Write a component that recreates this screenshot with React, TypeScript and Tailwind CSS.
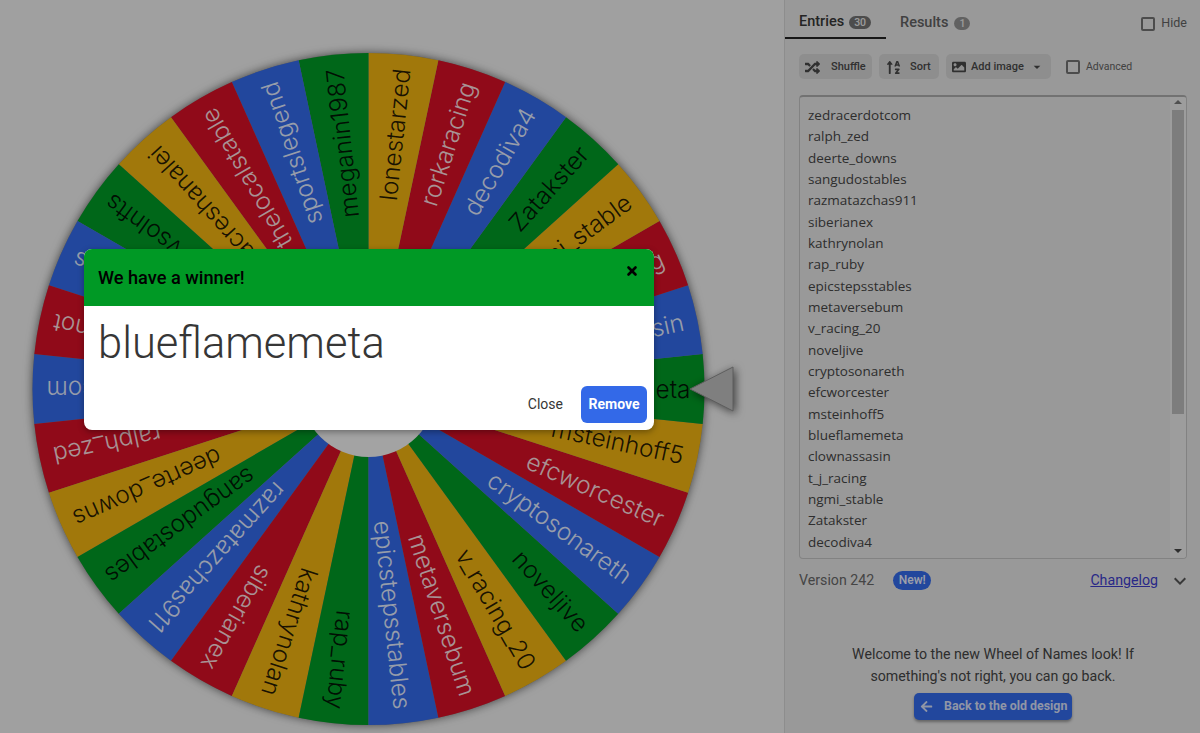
import React from 'react';
import { MdExpandMore, MdArrowDropDown } from 'react-icons/md';
import { FaSortAlphaUp, FaImage, FaRandom, FaArrowLeft } from 'react-icons/fa';
import { X } from 'lucide-react';

const entries = [
  'zedracerdotcom', 'ralph_zed', 'deerte_downs', 'sangudostables', 'razmatazchas911', 'siberianex',
  'kathrynolan', 'rap_ruby', 'epicstepsstables', 'metaversebum', 'v_racing_20', 'noveljive',
  'cryptosonareth', 'efcworcester', 'msteinhoff5', 'blueflamemeta', 'clownassasin', 't_j_racing',
  'ngmi_stable', 'Zatakster', 'decodiva4', 'rorkaracing', 'lonestarzed', 'meganin1987',
  'sportslegend', 'thelocalstable', 'acreshanalei', 'vsolnfts', 'stablemates', 'tonysnot',
];

const colors = ['#3369e8', '#d50f25', '#eeb211', '#009925'];
const textColors = ['#ffffff', '#ffffff', '#000000', '#000000'];

const CX = 368.5;
const CY = 389;
const R = 336;

const slicePath = (deg: number) => {
  const a = ((deg - 6) * Math.PI) / 180;
  const b = ((deg + 6) * Math.PI) / 180;
  return `M${CX} ${CY}L${CX + R * Math.cos(a)} ${CY + R * Math.sin(a)}A${R} ${R} 0 0 1 ${CX + R * Math.cos(b)} ${CY + R * Math.sin(b)}Z`;
};

const Wheel: React.FC = () => (
  <svg width={784} height={733} viewBox="0 0 784 733" className="block">
    <circle cx={CX} cy={CY} r={R} fill="#888888" className="drop-shadow-[0_0_5px_rgba(0,0,0,0.6)]" />
    {entries.map((name, i) => {
      const deg = (15 - i) * 12;
      return (
        <g key={name}>
          <path d={slicePath(deg)} fill={colors[i % 4]} />
          <text
            transform={`translate(${CX} ${CY}) rotate(${deg})`}
            x={R - 14}
            y={8.5}
            textAnchor="end"
            fontSize={24.4}
            fontWeight={300}
            fill={textColors[i % 4]}
            fillOpacity={0.85}
            className="font-['Inter',sans-serif]"
          >
            {name}
          </text>
        </g>
      );
    })}
    <circle cx={CX} cy={CY} r={68} fill="#f0f0f0" />
    <polygon
      points="690,389 733,367 733,411"
      fill="#bcbcbc"
      stroke="#8a8a8a"
      strokeWidth={1}
      className="drop-shadow-[2px_2px_4px_rgba(0,0,0,0.6)]"
    />
  </svg>
);

const Checkbox: React.FC<{ className?: string }> = ({ className }) => (
  <span className={`block w-[14px] h-[14px] border-2 border-[#707070] rounded-[2px] ${className ?? ''}`} />
);

const ToolButton: React.FC<{ children: React.ReactNode; className: string }> = ({ children, className }) => (
  <button className={`flex items-center h-[25px] pt-[1px] rounded-[5px] bg-[#d2d2d2] text-[11px] font-medium text-[#484848] ${className}`}>
    {children}
  </button>
);

const Panel: React.FC = () => (
  <div className="w-[416px] h-[733px] shrink-0 bg-[#e2e2e2] border-l border-[#d0d0d0] flex flex-col overflow-hidden pr-[13px] text-[#363636]">
    {/* Tabs */}
    <div className="flex items-start h-[39px]">
      <div className="w-[101px] h-[39px] border-b-2 border-[#222222] flex items-center gap-[5px] pl-[14px] pt-[7px] text-[14.5px] font-medium">
        Entries
        <span className="h-[13px] px-[5px] rounded-full bg-[#707070] text-[#e4e4e4] text-[10.5px] leading-[13px]">30</span>
      </div>
      <div className="h-[39px] flex items-center gap-[6px] pl-[14px] pt-[7px] text-[14.5px] font-medium text-[#606060]">
        Results
        <span className="w-[16px] h-[13px] text-center rounded-full bg-[#909090] text-[#e4e4e4] text-[10.5px] leading-[13px]">1</span>
      </div>
      <div className="ml-auto h-[39px] flex items-center gap-[6px] pt-[8px] text-[12.5px] text-[#606060]">
        <Checkbox />
        Hide
      </div>
    </div>

    {/* Toolbar */}
    <div className="flex items-center mt-[15px] ml-[14px] h-[25px] gap-[7px]">
      <ToolButton className="w-[73px] pl-[6px] gap-[11px]">
        <FaRandom size={15} />
        Shuffle
      </ToolButton>
      <ToolButton className="w-[60px] pl-[7px] gap-[9px]">
        <FaSortAlphaUp size={15} />
        Sort
      </ToolButton>
      <ToolButton className="w-[105px] pl-[6px] gap-[5px]">
        <FaImage size={14} />
        Add image
        <MdArrowDropDown size={16} />
      </ToolButton>
      <Checkbox className="ml-[8px]" />
      <span className="text-[10.5px] pt-[1px] ml-[-1px] text-[#606060]">Advanced</span>
    </div>

    {/* Entries box */}
    <div className="relative flex mt-[16px] ml-[14px] h-[464px] border border-[#c0c0c0] border-t-2 border-t-[#a8a8a8] rounded-[4px] overflow-hidden">
      <div className="flex-1 pl-[8px] pt-[8px] font-['Open_Sans',sans-serif] text-[13.5px] leading-[21.33px] text-[#444444] overflow-hidden">
        {entries.slice(0, 22).map((name) => (
          <div key={name}>{name}</div>
        ))}
      </div>
      <div className="w-[16px] shrink-0 flex flex-col items-center bg-[#e8e8e8]">
        <span className="mt-[3px] border-x-[4px] border-x-transparent border-b-[4px] border-b-[#777777]" />
        <div className="w-[12px] h-[304px] mt-[6px] bg-[#b8b8b8]" />
        <span className="mt-auto mb-[5px] border-x-[4px] border-x-transparent border-t-[4px] border-t-[#444444]" />
      </div>
    </div>

    {/* Version */}
    <div className="flex items-center ml-[14px] mt-[11px] h-[21px] text-[14.2px]">
      <span className="text-[#666666]">Version 242</span>
      <span className="ml-[19px] h-[19px] w-[38px] text-center rounded-full bg-[#3369e8] text-[#e8ecfa] text-[12px] font-medium leading-[19px]">New!</span>
      <a className="ml-auto text-[#3c3cc8] underline">Changelog</a>
      <MdExpandMore size={24} className="ml-[10px] mr-[-5px] text-[#555555]" />
    </div>

    {/* Welcome */}
    <p className="mt-[52px] ml-[14px] text-center text-[14.2px] leading-[22px] text-[#444444]">
      Welcome to the new Wheel of Names look! If
      <br />
      something's not right, you can go back.
    </p>
    <button className="self-center ml-[14px] mt-[6px] w-[158px] h-[27px] rounded-[5px] bg-[#3369e8] text-[#d4ddf5] text-[12.4px] font-bold flex items-center gap-[11px] pl-[6px] shadow-[0_2px_3px_rgba(0,0,0,0.35)]">
      <FaArrowLeft size={13} />
      Back to the old design
    </button>
  </div>
);

const App: React.FC = () => (
  <div className="relative w-[1200px] h-[733px] overflow-hidden flex bg-[#ececec] font-['Roboto',sans-serif]">
    <Wheel />
    <Panel />

    {/* Modal backdrop */}
    <div className="absolute inset-0 bg-black/[0.32]" />

    {/* Winner dialog */}
    <div className="absolute left-[84px] top-[249px] w-[570px] h-[181px] rounded-[8px] overflow-hidden bg-white flex flex-col shadow-[0_2px_6px_rgba(0,0,0,0.35)]">
      <div className="h-[57px] bg-[#009925] flex items-center justify-between pl-[14px] pr-[15px]">
        <span className="text-[18.2px] font-medium text-black">We have a winner!</span>
        <X size={14} strokeWidth={4.5} className="mb-[14px] text-black" />
      </div>
      <div className="pl-[14px] pt-[10px] h-[80px] text-[43.5px] font-light leading-[56px] text-[#363636]">blueflamemeta</div>
      <div className="flex items-center justify-end pr-[7px] h-[37px] text-[14px]">
        <span className="text-[#363636] mr-[18px]">Close</span>
        <button className="w-[66px] h-[37px] rounded-[6px] bg-[#3369e8] text-white font-bold">Remove</button>
      </div>
    </div>
  </div>
);

export default App;
